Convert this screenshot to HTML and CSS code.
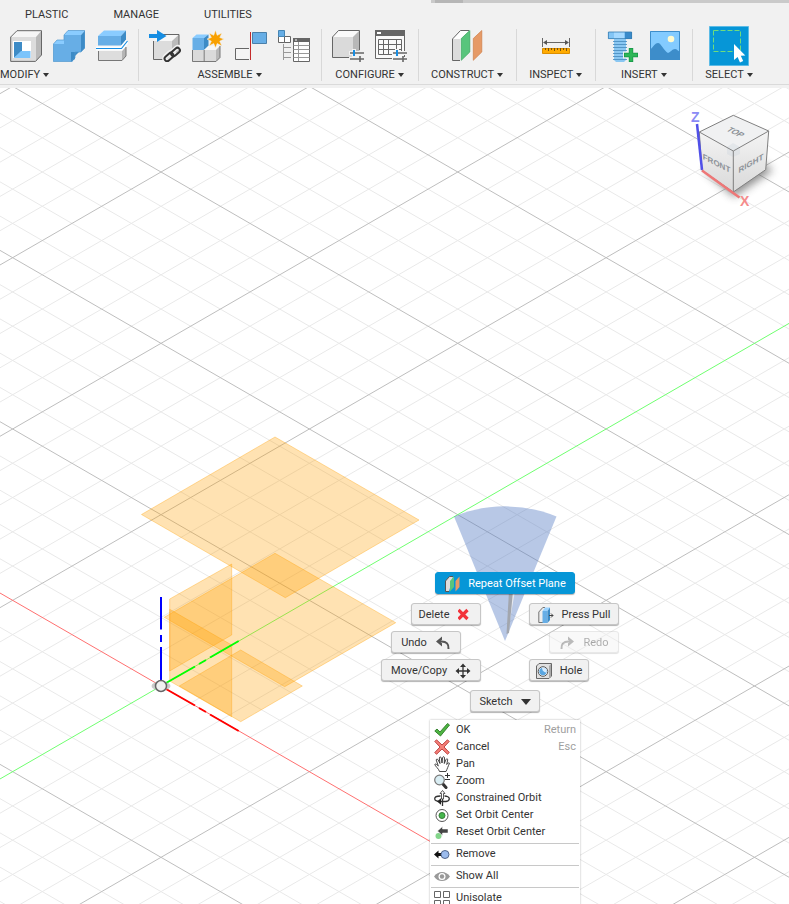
FILE: index.html
```html
<!DOCTYPE html>
<html lang="en">
<head>
<meta charset="utf-8">
<title>Design workspace</title>
<link rel="stylesheet" href="styles.css">
</head>
<body>
<header class="toolbar">
  <div class="scroll-strip"><div class="scroll-thumb"></div></div>
  <nav class="tabs">
    <a href="#plastic">PLASTIC</a>
    <a href="#manage">MANAGE</a>
    <a href="#utilities">UTILITIES</a>
  </nav>
  <div class="groups">
    <section class="group group-first">
      <div class="icons">
        <button class="tool" aria-label="Shell"><svg viewBox="0 0 32 32"><path fill="#f5f5f5" d="M.7 7 7 .7h24.500L26 7z"/><path fill="#b9b9b9" d="M26 7 31.500.7V25L25.500 31.500z"/><path fill="#dcdcdc" d="M.7 7H26v24.500H.7z"/><path fill="#fff" d="M3 11h18v17H3z"/><path fill="#3d8bc6" d="M4 12v16l8-7v-9z"/><path fill="#7cc4fb" d="M4 28l7-7h9.500v7z"/><path fill="none" stroke="#666" d="M.7 31.400V7L7 .7h24.500V25l-6 6.400z"/></svg></button>
        <button class="tool" aria-label="Combine"><svg viewBox="0 0 32 32"><path fill="#8accff" d="M.3 14 4 10h7V5L15 .5h17L28 5H12v9z"/><path fill="#67aee6" d="M.3 14H11V5h17v17h-8v9.500H.3z"/><path fill="#3d8bc6" d="M28 5 32 .5v17.500L28 22zM18 22h8l-4 4v3l-4 3z"/><path fill="none" stroke="#5198cf" stroke-width=".7" d="M.4 31.500V14L4 10h7V5L15 .5h16.600v17.500L28 22h-6v5.500l-4 4z"/></svg></button>
        <button class="tool" aria-label="Split Body"><svg viewBox="0 0 32 32"><path fill="#8accff" d="m2 6 6-5.500h22L25 6z"/><path fill="#67aee6" d="M2 6h23v9.500H2z"/><path fill="#3d8bc6" d="m25 6 5-5.500V10l-5 5.500z"/><path fill="#ddd" d="M2 21h24v9.500H2z"/><path fill="#b5b5b5" d="m26 21 4-4.500V26l-4 4.500z"/><path fill="none" stroke="#777" d="M2.500 21v9.500H26l4-4.500v-9"/><path fill="none" stroke="#fff" stroke-width="4" d="M0 18.500h25.500l6-7.500"/><path fill="none" stroke="#168de2" stroke-width="1.200" d="M0 18.500h25.500l6-7.500"/></svg></button>
      </div>
      <button class="group-label">MODIFY<span class="caret"></span></button>
    </section>
    <section class="group">
      <div class="icons">
        <button class="tool" aria-label="Insert Derive"><svg viewBox="0 0 32 32"><path fill="#f7f7f7" d="m4.500 11 6-6.500H30L23 11z"/><path fill="#dcdcdc" d="M4.500 11H23v18.500H4.500z"/><path fill="#bbb" d="m23 11 7-6.500V22l-7 7z"/><path fill="none" stroke="#666" d="M13 4.500h17V20M4.500 11v18.500h12"/><path fill="#168de2" d="M0 4h8V0l9.500 6L8 12V8H0z"/><g fill="none" stroke="#f1f1f1" stroke-width="5"><rect x="15" y="24" width="11" height="6" rx="3" transform="rotate(-42 20.500 27)"/><rect x="22" y="19" width="11" height="6" rx="3" transform="rotate(-42 27.500 22)"/></g><g fill="none" stroke="#333" stroke-width="2"><rect x="15" y="24.500" width="10" height="5" rx="2.500" transform="rotate(-42 20 27)"/><rect x="21.500" y="19.500" width="10" height="5" rx="2.500" transform="rotate(-42 26.500 22)"/></g></svg></button>
        <button class="tool" aria-label="New Component"><svg viewBox="0 0 32 32"><path fill="#8accff" d="m.5 8 4-3.500h12L12 8z"/><path fill="#67aee6" d="M.5 8H12v12H.5z"/><path fill="#3d8bc6" d="m12 8 4.500-3.500v12L12 20z"/><path fill="#f7f7f7" d="M12 20l4-4h12l-4 4z"/><path fill="#dadada" d="M.5 20H12v11.500H.5zM12.500 20H24v11.500H12.500z"/><path fill="#b8b8b8" d="m24 20 4-4v11.500l-4 4z"/><path fill="none" stroke="#6c6c6c" stroke-width=".9" d="M.5 20v11.500H24l4-4V16M12.200 20v11.500"/><path fill="#f8a000" stroke="#f1f1f1" stroke-width=".6" d="m23.500 0 1.700 5.300L30 3l-2.200 4.500L32 9l-4.200 2.200L30 16l-4.800-2.400L23.500 18l-1.800-4.400L17 16l2.300-4.800L15 9l4.300-1.500L17 3l4.700 2.300z"/></svg></button>
        <button class="tool" aria-label="Joint"><svg viewBox="0 0 32 32"><path fill="#f5f5f5" stroke="#666" d="M14 29.500H.5v-11H14"/><path fill="#67aee6" stroke="#4a80aa" d="M17.500 2.500h14v11h-14z"/><path stroke="#c42b2b" d="M15.500 2v28"/></svg></button>
        <button class="tool" aria-label="Bill of Materials"><svg viewBox="0 0 32 32"><path fill="#fff" stroke="#666" d="M.5 6.500h6v6h-6zM6.500 6.500h6v6h-6z"/><path fill="#67aee6" stroke="#4686b5" d="M.5.5h6v6h-6z"/><path fill="none" stroke="#999" d="M5.500 14v16M5.500 17.500H13M5.500 22.500H13M5.500 27.500H13"/><path fill="#fff" stroke="#666" d="M15.500 8.500h16v23h-16z"/><path fill="#666" d="M15 8h17v4H15z"/><path fill="#fff" d="M17 9.500h2v1h-2z"/><path fill="none" stroke="#999" d="M15.500 15.500h16m-16 4h16m-16 4h16m-16 4h16M20.500 12v19"/></svg></button>
      </div>
      <button class="group-label">ASSEMBLE<span class="caret"></span></button>
    </section>
    <section class="group">
      <div class="icons">
        <button class="tool" aria-label="Configure"><svg viewBox="0 0 32 32"><path fill="#fafafa" d="m.5 7 6-6.500h21L21 7z"/><path fill="#dadada" d="M.5 7H21v20.500H.5z"/><path fill="#b8b8b8" d="m21 7 6.500-6.500V21L21 27.500z"/><path fill="none" stroke="#666" d="M27.500 20V.5h-21L.5 7v20.500H18"/><path stroke="#f1f1f1" stroke-width="4" d="M17 23h15M17 29h15M22 19v8"/><path stroke="#666" stroke-width="1.600" d="M18 23h14M18 29h14M28 26v6"/><path stroke="#168de2" stroke-width="2" d="M22 20v6"/></svg></button>
        <button class="tool" aria-label="Configuration Table"><svg viewBox="0 0 32 32"><path fill="#fafafa" stroke="#666" d="M.5.5h29v28H.5z"/><path fill="#666" d="M0 0h30v6H0z"/><path fill="#fff" d="M2 2h4v2H2z"/><path fill="none" stroke="#666" d="M3.500 9.500h23v15h-23zM3.500 14.500h23m-23 5h23M8.500 9.500v15m5-15v15m8-15v15"/><path stroke="#f5f5f5" stroke-width="4" d="M17 23h15M17 29h15M22 19v8"/><path stroke="#666" stroke-width="1.600" d="M18 23h14M18 29h14M28 26v6"/><path stroke="#168de2" stroke-width="2" d="M22 20v6"/></svg></button>
      </div>
      <button class="group-label">CONFIGURE<span class="caret"></span></button>
    </section>
    <section class="group">
      <div class="icons">
        <button class="tool" aria-label="Offset Plane"><svg viewBox="0 0 32 32"><path fill="#fff" d="m1.500 9 8-8.500H18L9.500 9z"/><path fill="#dcdcdc" d="M1.500 9H9v21.500H1.500z"/><path fill="none" stroke="#666" d="M9 30.500H1.500V9l8-8.500H18"/><path fill="#58c57c" stroke="#36a65c" stroke-width=".7" d="m10.300 8.500 8.500-8V22l-8.500 8.300z"/><path fill="#e69a66" stroke="#cf7f49" stroke-width=".7" d="m22.300 8.500 8.500-8V22l-8.500 8.300z"/></svg></button>
      </div>
      <button class="group-label">CONSTRUCT<span class="caret"></span></button>
    </section>
    <section class="group">
      <div class="icons">
        <button class="tool" aria-label="Measure"><svg viewBox="0 0 32 32"><path fill="none" stroke="#666" d="M2.500 8v9M29.500 8v9M4 12.500h24"/><path fill="#555" d="m3 12.500 4-2.500v5zM29 12.500 25 10v5z"/><path fill="#ffab00" stroke="#dc8e00" d="M2.500 18.500h27v5h-27z"/><path stroke="#775210" d="M5.500 18v2m3-2v3m3-3v2m3-2v3m3-3v2m3-2v3m3-3v2m3-2v3"/></svg></button>
      </div>
      <button class="group-label">INSPECT<span class="caret"></span></button>
    </section>
    <section class="group">
      <div class="icons">
        <button class="tool" aria-label="Insert Fastener"><svg viewBox="0 0 32 32"><path fill="#83c5f5" d="M2 2h24v7H2z"/><path fill="#a5d9ff" d="M8 2h10v7H8z"/><path fill="#398aca" d="M19 2h7v7h-7z"/><path fill="none" stroke="#367cb0" stroke-width=".8" d="M2.400 2h23.200v6.600H2.400z"/><path fill="#8ac7f2" d="M8 9h12v21l-2 2h-8l-2-2z"/><path stroke="#4e91c2" stroke-width=".9" d="M7 11.500h14m-14 3h14m-14 3h14m-14 3h14m-14 3h14m-14 3h14m-14 3h14"/><path stroke="#f1f1f1" stroke-width="7" d="M17 25h15M25 17v15"/><path stroke="#159447" stroke-width="4.400" d="M18 25h14M25 18v14"/><path stroke="#2eb757" stroke-width="3" d="M18.700 25h12.600M25 18.700v12.600"/></svg></button>
        <button class="tool" aria-label="Insert Image"><svg viewBox="0 0 32 32"><path fill="#83cbff" d="M1 1h30v29H1z"/><path fill="#3d8dca" d="M1 20c4-4 5-7 8-7s6 8 10 10c3-1 4-4 7-4 2 0 3 2 5 3v8H1z"/><circle cx="22" cy="9" r="3.300" fill="#fffbd0"/><path fill="none" stroke="#3d8dca" d="M1.500 1.500h29v28h-29z"/></svg></button>
      </div>
      <button class="group-label">INSERT<span class="caret"></span></button>
    </section>
    <section class="group group-last">
      <div class="icons">
        <button class="tool tool-active" aria-label="Select"><svg viewBox="0 0 40 40"><path fill="#0696d7" stroke="#5cbbe6" d="M.5.500h39v39H.5z"/><path fill="none" stroke="#6fdc7c" stroke-dasharray="5 2" d="M4.500 4.500h27v21h-27z"/><path fill="#fff" d="M25 18v16l3.600-3 2.400 5.500 3.200-1.400-2.400-5.300 4.500-.2z"/></svg></button>
      </div>
      <button class="group-label">SELECT<span class="caret"></span></button>
    </section>
  </div>
</header>

<main class="canvas">
  <svg class="scene" aria-hidden="true">
    <g transform="translate(161 598)">
      <path id="grid-minor" class="grid-minor"/>
      <path id="grid-major" class="grid-major"/>
      <path id="axis-x" class="axis axis-x"/>
      <path id="axis-y" class="axis axis-y"/>
      <g class="planes">
        <path d="M-19.500-171.500 114-249 258-166 124.300-88.300z"/>
        <path d="M3.300-68.700 114-132.700 234.700-63.300 123.700.7z"/>
        <path d="M8.700-87 70.700-122v71L8.700-15z"/>
        <path d="M8.700-76.700 70.700-41v71.700L8.700-5z"/>
        <path d="M79.700-36 141.300 0 79.700 35.700 18.300 0z"/>
      </g>
      <path class="triad triad-z" d="M0-89v32.500M0-51v7M0-39V-5"/>
      <path class="triad triad-y" d="m5-3 29-16.500M38-22l7-4M49-28.500 77.700-45"/>
      <path class="triad triad-x" d="M5 3l29 16.500M38 22l7 4M49 28.500 77.700 45"/>
      <ellipse rx="9.500" ry="4.500" fill="#b5b5b5" opacity=".7"/>
      <circle r="5.500" fill="#f1f1f1" stroke="#666" stroke-width="1.500"/>
    </g>
    <g transform="translate(505 553)">
      <path class="wedge" d="M0 0-51-124.500A134.500 134.500 0 0 1 51.500-124.500z"/>
      <path fill="#e5e8ee" d="M2.500-7 5-50h5z"/>
      <path fill="#a2a6ae" d="M1.500-7 4-50h4L4-8z"/>
    </g>
  </svg>

  <svg class="view-cube" viewBox="0 0 109 115" role="img" aria-label="View cube">
    <defs>
      <filter id="soft" x="-50%" y="-50%" width="200%" height="200%"><feGaussianBlur stdDeviation="4"/></filter>
      <linearGradient id="side" x2="0" y2="1"><stop offset="0" stop-color="#f4f4f4"/><stop offset="1" stop-color="#d9d9d9"/></linearGradient>
    </defs>
    <path d="M24 70 54 97 93 70 75 58z" fill="#555" opacity=".65" filter="url(#soft)"/>
    <path d="M19.300 32 53.300 15.300 88.700 31 53.300 51z" fill="#f0f1f2"/>
    <path d="M19.300 32 53.300 51v41L22 70.300z" fill="url(#side)"/>
    <path d="M53.300 51 88.700 31l-3 38.700L53.300 92z" fill="url(#side)"/>
    <path d="m47 47 6-4 7 4v7l-7 3-6-3z" fill="#cad4de" opacity=".35"/>
    <path d="M19.300 32 53.300 15.300 88.700 31l-3 38.700L53.300 92 22 70.300zM19.300 32l34 19 35.400-20M53.300 51v41" fill="none" stroke="#808080"/>
    <path d="M17 24l5 46" stroke="#5050e8" stroke-width="2.500"/>
    <path d="m22 70.500 37.500 27" stroke="#ee7777" stroke-width="2.500"/>
    <text class="axis-name" x="11" y="22" fill="#8b8bf5">Z</text>
    <text class="axis-name" x="60" y="106" fill="#f58b8b">X</text>
    <text class="face" text-anchor="middle" transform="translate(53 34) rotate(25) skewX(-30)">TOP</text>
    <text class="face" text-anchor="middle" transform="translate(36.500 66) skewY(27)">FRONT</text>
    <text class="face" text-anchor="middle" transform="translate(71 66) skewY(-30)">RIGHT</text>
  </svg>

  <div class="radial">
    <button class="mark mark-wide mark-active"><svg viewBox="0 0 16 16"><path fill="#ddd" stroke="#555" d="M5 15.500H1.500V5l4-4.500H9"/><path fill="#58c57c" d="M6 5l4-4.500V11l-4 4.500z"/><path fill="#e69a66" d="m11.500 5 4-4.500V11l-4 4.500z"/></svg>Repeat Offset Plane</button>
    <div class="wing">
      <div class="left">
        <button class="mark mark-mid">Delete<svg viewBox="0 0 16 16"><path d="m.500 3 9 9m0-9-9 9" stroke="#f2323a" stroke-width="3.200"/></svg></button>
        <button class="mark mark-mid inset-left">Undo<svg viewBox="0 0 16 16"><path fill="none" stroke="#555" stroke-width="2" d="M13.500 14c.5-5-2-7.500-7-7.500H3"/><path fill="#555" d="m1 6.500 6-5v3.200L5 6.500l2 1.800v3.200z"/></svg></button>
        <button class="mark mark-long">Move/Copy<svg viewBox="0 0 16 16"><path stroke="#333" stroke-width="1.300" d="M8 2v12M2 8h12"/><path fill="#333" d="m8 .5 3 3.500H5zM8 15.500 5 12h6zM.5 8 4 5v6zM15.500 8 12 11V5z"/></svg></button>
      </div>
      <div class="right">
        <button class="mark mark-pull"><svg viewBox="0 0 16 16"><path fill="#eee" stroke="#555" stroke-width=".8" d="M5 15.500H.8V5l4-4.500H7"/><path fill="#67aee6" d="M4.500 4h5v12h-5z"/><path fill="#9bd3ff" d="m4.500 4 2.500-3.500h5L9.500 4z"/><path fill="#3d8bc6" d="M9.500 4 12 .5V13l-2.500 3z"/><path fill="none" stroke="#444" d="M11 8.500h4M13 6.500l2 2-2 2"/></svg>Press Pull</button>
        <button class="mark mark-mid inset-right" disabled><svg viewBox="0 0 16 16"><path fill="none" stroke="#555" stroke-width="2" d="M2.500 14c-.5-5 2-7.500 7-7.500H13"/><path fill="#555" d="m15 6.500-6-5v3.200l2 1.800-2 1.800v3.200z"/></svg>Redo</button>
        <button class="mark mark-short"><svg viewBox="0 0 16 16"><path fill="#e0e0e0" stroke="#666" d="M.5 15.500V3l2.500-2.500h12.500V13L13 15.500z"/><path fill="#aaa" d="m13 3 2-2v12l-2 2z"/><circle cx="7" cy="8.500" r="4.800" fill="#fff" stroke="#555"/><circle cx="7" cy="8.500" r="3.700" fill="#5aa6e0"/><path fill="#d6ecff" d="M6 4.800a3.700 3.700 0 0 1 4.500 4.700C8.500 9.500 6 8 6 4.800z"/></svg>Hole</button>
      </div>
    </div>
    <button class="mark mark-mid">Sketch<span class="caret caret-big"></span></button>
  </div>

  <ul class="menu">
    <li><button><svg viewBox="0 0 16 16"><path fill="#4fb443" stroke="#2a7a24" stroke-width=".9" d="M.8 9 3 7l3 3 7.500-8.500L15.500 3 6.500 14z"/></svg>OK<kbd>Return</kbd></button></li>
    <li><button><svg viewBox="0 0 16 16"><path fill="#f58078" stroke="#b53636" stroke-width=".9" d="M2.500.8 8 6 13.500.8l1.700 1.700L10 8l5.300 5.500-1.800 1.700L8 10l-5.500 5.300-1.700-1.800L6 8 .8 2.500z"/></svg>Cancel<kbd>Esc</kbd></button></li>
    <li><button><svg viewBox="0 0 16 16"><path fill="#fff" stroke="#333" stroke-width=".9" stroke-linejoin="round" d="M5.500 15.500C5 13 1 10 .8 8.500 1 7.500 2.500 8 4.300 10L2.200 4c0-1.200 1.500-1.300 2 0L6 7.500 5.300 2c.2-1.400 1.700-1.300 2 0L8 7l.6-5.500c.3-1.200 1.800-1 1.900.3L10.300 7.500 12 3.500c.5-1.200 2-.8 1.700.5l-1 4.500 1.500-1.500c1-.6 1.600.2 1 1-1 2-2 5-3.200 7.500z"/></svg>Pan</button></li>
    <li><button><svg viewBox="0 0 16 16"><path stroke="#333" stroke-width="3" stroke-linecap="round" d="m8.500 10.500 3.500 4"/><circle cx="5.500" cy="7" r="4.800" fill="#d9edf3" stroke="#777" stroke-width="1.200"/><path stroke="#333" d="M13.500 0v5M11 2.500h5M11 6.500h5"/></svg>Zoom</button></li>
    <li><button><svg viewBox="0 0 16 16"><path fill="none" stroke="#333" stroke-width="1.300" d="M6.500 6C3 6 .7 7.300.7 8.700S3 11.500 7 11.500h5c2-.3 3.300-1.400 3.300-2.800S13 6 10.500 6"/><path fill="#222" d="m3 11.500 4-3.300v6.600z"/><path stroke="#333" stroke-width="1.300" d="M8.500 7v9"/><path fill="#fff" stroke="#333" stroke-width=".8" d="M8.500.5 11 3.500H9.500V9h-2V3.500H6z"/></svg>Constrained Orbit</button></li>
    <li><button><svg viewBox="0 0 16 16"><circle cx="8" cy="8.500" r="6" fill="#fff" stroke="#555"/><circle cx="8" cy="8.500" r="3" fill="#45b64c" stroke="#377b38"/></svg>Set Orbit Center</button></li>
    <li><button><svg viewBox="0 0 16 16"><circle cx="4.500" cy="12" r="3" fill="#83d58a"/><path fill="#444" stroke="#fff" stroke-width=".5" d="m3.500 7 5-4.500V5H14v4H8.500v2.500z"/></svg>Reset Orbit Center</button></li>
    <li class="divider" role="separator"></li>
    <li><button><svg viewBox="0 0 16 16"><path fill="#111" d="m0 8.500 4.500-4V7H9v3H4.500v2.500z"/><circle cx="11" cy="8.500" r="4" fill="#9bbbed" stroke="#52668c"/></svg>Remove</button></li>
    <li class="divider" role="separator"></li>
    <li><button><svg viewBox="0 0 16 16"><path fill="#999" d="M0 8.500C4 2.500 12 2.500 16 8.500 12 14.500 4 14.500 0 8.500z"/><circle cx="8" cy="8.500" r="3.500" fill="#fff"/><circle cx="8" cy="8.500" r="2.200" fill="#999"/></svg>Show All</button></li>
    <li class="divider" role="separator"></li>
    <li><button><svg viewBox="0 0 16 16"><path fill="#fff" stroke="#666" d="M.5 1.500h6v6h-6zM9.500 1.500h6v6h-6zM.5 10.500h6v6h-6zM9.500 10.500h6v6h-6z"/></svg>Unisolate</button></li>
  </ul>
</main>
<script src="grid.js"></script>
</body>
</html>
```
FILE: grid.js
```js
// Isometric ground grid, in coordinates relative to the model origin.
const SLOPE = 171.33 / 296.74;
const STEP = 171.33 / 5;
const REACH = 4000;

function line(direction, offset) {
  const rise = direction * SLOPE * REACH;
  return `M${-REACH} ${offset - rise}L${REACH} ${offset + rise}`;
}

let minor = "";
let major = "";
for (let i = -60; i <= 60; i++) {
  if (i === 0) continue;
  const pair = line(1, i * STEP) + line(-1, i * STEP);
  if (i % 5 === 0) major += pair;
  else minor += pair;
}
document.getElementById("grid-minor").setAttribute("d", minor);
document.getElementById("grid-major").setAttribute("d", major);
document.getElementById("axis-x").setAttribute("d", line(1, 0));
document.getElementById("axis-y").setAttribute("d", line(-1, 0));
```
FILE: styles.css
```css
* { box-sizing: border-box; }

body {
  margin: 0;
  min-height: 100vh;
  display: flex;
  flex-direction: column;
  background: #f1f1f1;
  color: #333;
  font: 11px/16px Roboto, "Liberation Sans", sans-serif;
}

button {
  margin: 0;
  padding: 0;
  border: 0;
  background: none;
  color: inherit;
  font: inherit;
  white-space: nowrap;
}

svg { display: block; }

/* Toolbar */
.toolbar {
  position: relative;
  overflow: hidden;
  padding-bottom: 3px;
  border-bottom: 1px solid #dadada;
}

.scroll-strip {
  position: absolute;
  top: 0;
  left: 431px;
  right: 0;
  height: 3px;
  padding-left: 4px;
  background: #cacaca;
}

.scroll-thumb { width: 28px; height: 3px; background: #b6b6b6; }

.tabs {
  display: flex;
  gap: 45px;
  padding: 7px 0 6px 25px;
}

.tabs a { color: inherit; text-decoration: none; }

.groups { display: flex; }

.group {
  display: flex;
  flex-direction: column;
  align-items: center;
  gap: 6px;
  padding: 1px 11px 0 10px;
  border-left: 1px solid #d8d8d8;
}

.group-first { align-items: flex-start; padding: 1px 10px 0 0; border-left: 0; }
.group-first .icons { padding-left: 10px; }
.group-last { padding-right: 9px; }

.icons { display: flex; gap: 11px; }
.tool svg { width: 32px; height: 32px; }
.tool-active { margin: -4px; }
.tool-active svg { width: 40px; height: 40px; }

.group-label {
  display: flex;
  align-items: center;
  gap: 3px;
  height: 13px;
  padding: 0 2px;
}

.group-first .group-label { padding-left: 0; }

.caret {
  border: solid transparent;
  border-width: 4px 3px 0;
  border-top-color: #333;
}

.caret-big { border-width: 6px 5px 0; }

/* Canvas */
.canvas {
  position: relative;
  flex: 1;
  margin-top: 3px;
  overflow: hidden;
  background: #fff;
}

.scene { position: absolute; inset: 0; width: 100%; height: 100%; }
.grid-minor { stroke: #e9e9e9; }
.grid-major { stroke: #bebebe; }
.axis { stroke-width: 1px; }
.axis-x { stroke: #ff7070; }
.axis-y { stroke: #70ff70; }
.planes path { fill: rgba(255, 160, 0, .3); stroke: rgba(255, 160, 0, .35); }
.triad { fill: none; stroke-width: 2px; }
.triad-x { stroke: #f00; }
.triad-y { stroke: #0f0; }
.triad-z { stroke: #00f; }
.wedge { fill: rgba(86, 124, 196, .42); }

.view-cube { position: absolute; top: 12px; right: 0; width: 109px; height: 115px; }
.axis-name { font: bold 14px "Liberation Sans", sans-serif; }
.face { font: bold 8px "Liberation Sans", sans-serif; fill: #8c9197; }

/* Marking menu around the pointer */
.radial {
  position: absolute;
  top: 484px;
  left: 381px;
  width: 248px;
  display: flex;
  flex-direction: column;
  align-items: center;
  gap: 9px;
}

.wing {
  align-self: stretch;
  display: grid;
  grid-template-columns: 1fr 1fr;
  gap: 48px;
}

.left, .right { display: flex; flex-direction: column; gap: 6px; }
.left { align-items: flex-end; }
.right { align-items: flex-start; }
.inset-left { margin-right: 20px; }
.inset-right { margin-left: 20px; }

.mark {
  display: flex;
  align-items: center;
  justify-content: center;
  gap: 8px;
  height: 22px;
  padding-top: 1px;
  border: 1px solid #c6c6c6;
  border-radius: 3px;
  background: #f1f1f1;
  box-shadow: 0 1px 1px rgba(0, 0, 0, .3);
}

.mark svg { width: 16px; height: 16px; }
.mark:disabled { opacity: .4; }
.mark-active { border-color: #0696d7; background: #0696d7; color: #fff; }
.mark-wide { width: 140px; }
.mark-long { width: 100px; }
.mark-pull { width: 90px; }
.mark-mid { width: 70px; }
.mark-short { width: 60px; }

/* Context menu */
.menu {
  position: absolute;
  top: 632px;
  left: 430px;
  width: 150px;
  margin: 0;
  padding: 1px 0 4px;
  list-style: none;
  background: #fff;
  box-shadow: 0 0 2px rgba(0, 0, 0, .3);
}

.menu button {
  display: flex;
  align-items: center;
  gap: 6px;
  width: 100%;
  height: 17px;
  padding: 0 4px;
}

.menu svg { width: 16px; height: 16px; }
.menu kbd { margin-left: auto; color: #a0a0a0; font: inherit; }
.divider { height: 1px; margin: 3px 1px 1px; background: #c8c8c8; }
```
